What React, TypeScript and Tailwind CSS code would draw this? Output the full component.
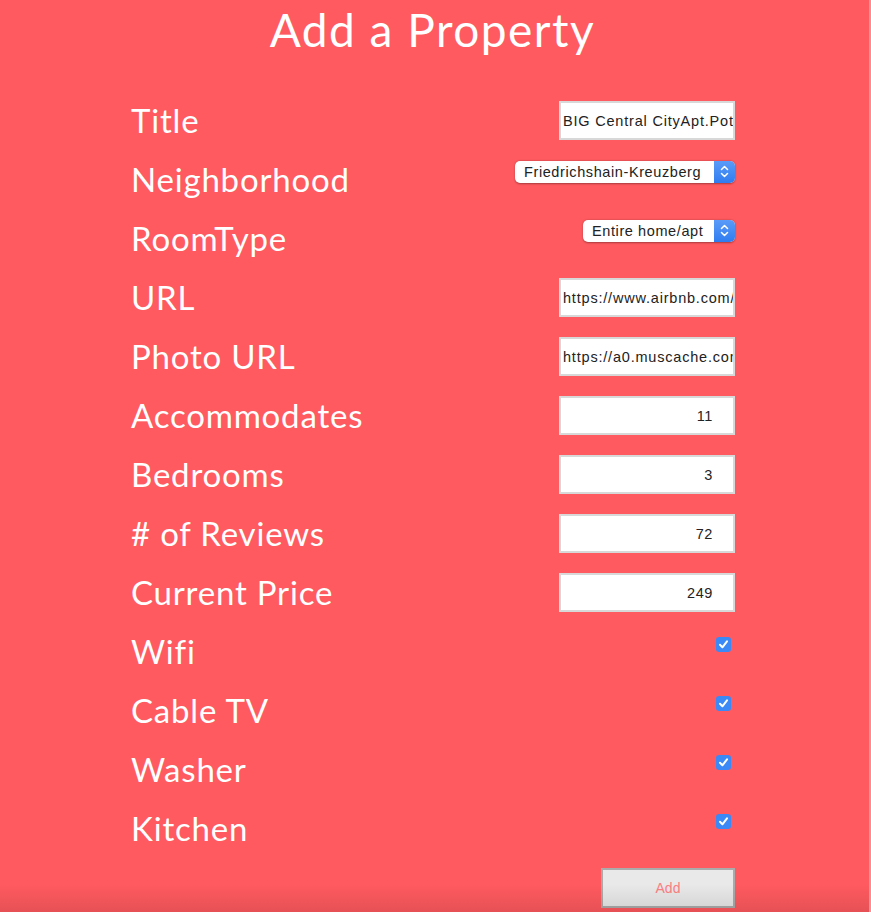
import React from "react";

const textRows = [
  { label: "Title", value: "BIG Central CityApt.Potsdamer Platz", kind: "text" },
  { label: "Neighborhood", value: "Friedrichshain-Kreuzberg", kind: "select", w: "w-[220px]" },
  { label: "RoomType", value: "Entire home/apt", kind: "select", w: "w-[152px]" },
  { label: "URL", value: "https://www.airbnb.com/rooms/123456", kind: "text" },
  { label: "Photo URL", value: "https://a0.muscache.com/im/pictures/1.jpg", kind: "text" },
  { label: "Accommodates", value: "11", kind: "number" },
  { label: "Bedrooms", value: "3", kind: "number" },
  { label: "# of Reviews", value: "72", kind: "number" },
  { label: "Current Price", value: "249", kind: "number" },
  { label: "Wifi", kind: "check" },
  { label: "Cable TV", kind: "check" },
  { label: "Washer", kind: "check" },
  { label: "Kitchen", kind: "check" },
];

function FakeSelect({ value, w }: { value: string; w?: string }) {
  return (
    <div
      className={`${w} mb-[16px] h-[22px] flex items-stretch rounded-[5px] bg-white shadow-[0_0.5px_2px_rgba(0,0,0,0.35)] overflow-hidden`}
    >
      <span className="flex-1 pl-[9px] text-[14.5px] tracking-[0.6px] leading-[22px] text-[#222] font-['Liberation_Sans',sans-serif] whitespace-nowrap overflow-hidden">
        {value}
      </span>
      <span className="w-[21px] bg-gradient-to-b from-[#5a9bf8] to-[#2f7cf0] flex items-center justify-center">
        <svg width="9" height="13" viewBox="0 0 9 13" fill="none" stroke="white" strokeWidth="1.5" strokeLinecap="round" strokeLinejoin="round">
          <path d="M1.5 4.5 4.5 1.5 7.5 4.5" />
          <path d="M1.5 8.5 4.5 11.5 7.5 8.5" />
        </svg>
      </span>
    </div>
  );
}

function Check() {
  return (
    <div className="mb-[14px] mr-[4px] w-[15px] h-[15px] rounded-[3px] bg-[#3b89f6] flex items-center justify-center">
      <svg width="11" height="11" viewBox="0 0 11 11" fill="none" stroke="white" strokeWidth="2" strokeLinecap="round" strokeLinejoin="round">
        <path d="M2 5.8 4.4 8.3 9 2.4" />
      </svg>
    </div>
  );
}

export default function App() {
  return (
    <div className="relative min-h-[912px] bg-[#ff5a5f] text-white font-['Lato',sans-serif] border-r-2 border-[#ff8e92]">
      <h1 className="text-center text-[46px] leading-[60px] tracking-[1.5px] pr-[4px]">Add a Property</h1>

      <form className="ml-[131px] w-[604px] mt-[31px]">
        {textRows.map((row) => (
          <div key={row.label} className="h-[59px] flex items-center justify-between">
            <label className="text-[33px] tracking-[0.8px]">{row.label}</label>
            {row.kind === "text" && (
              <input
                readOnly
                value={row.value}
                className="w-[176px] h-[39px] bg-white border-2 border-[#d8d8d8] pl-[2px] pr-0 text-[14.5px] tracking-[0.8px] text-[#222] font-['Liberation_Sans',sans-serif] outline-none"
              />
            )}
            {row.kind === "number" && (
              <input
                readOnly
                value={row.value}
                className="w-[176px] h-[39px] bg-white border-2 border-[#d8d8d8] pr-[20px] text-right text-[14.5px] tracking-[0.6px] text-[#222] font-['Liberation_Sans',sans-serif] outline-none"
              />
            )}
            {row.kind === "select" && <FakeSelect value={row.value!} w={row.w} />}
            {row.kind === "check" && <Check />}
          </div>
        ))}

        <div className="flex justify-end mt-[10px]">
          <button
            type="button"
            className="w-[134px] h-[40px] bg-[#e9e9e9] border-2 border-[#ababab] text-[14px] text-[#ff7f84] font-['Liberation_Sans',sans-serif]"
          >
            Add
          </button>
        </div>
      </form>

      <div className="pointer-events-none absolute bottom-0 left-0 right-0 h-[28px] bg-gradient-to-b from-transparent to-black/10" />
    </div>
  );
}
